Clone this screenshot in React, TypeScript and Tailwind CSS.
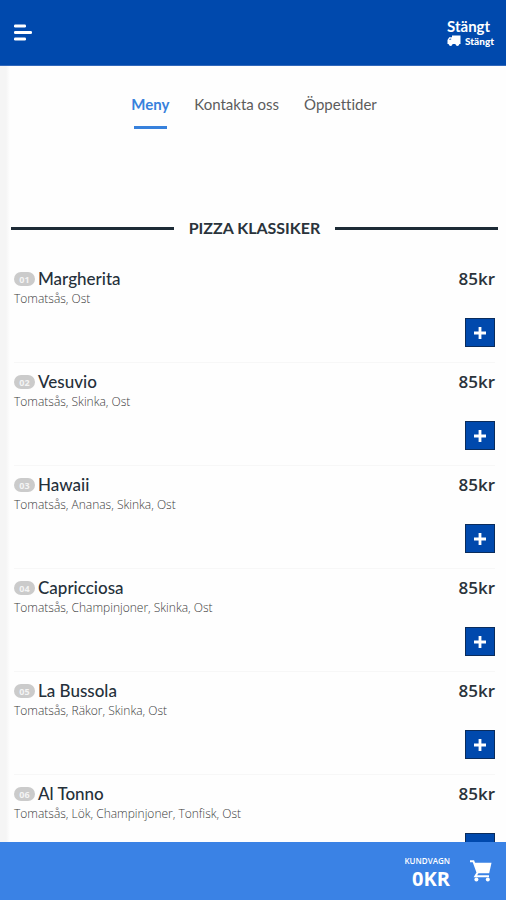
type Dish = { no: string; name: string; toppings: string; price: string };

const dishes: Dish[] = [
  { no: "01", name: "Margherita", toppings: "Tomatsås, Ost", price: "85kr" },
  { no: "02", name: "Vesuvio", toppings: "Tomatsås, Skinka, Ost", price: "85kr" },
  { no: "03", name: "Hawaii", toppings: "Tomatsås, Ananas, Skinka, Ost", price: "85kr" },
  { no: "04", name: "Capricciosa", toppings: "Tomatsås, Champinjoner, Skinka, Ost", price: "85kr" },
  { no: "05", name: "La Bussola", toppings: "Tomatsås, Räkor, Skinka, Ost", price: "85kr" },
  { no: "06", name: "Al Tonno", toppings: "Tomatsås, Lök, Champinjoner, Tonfisk, Ost", price: "85kr" },
];

function TruckIcon() {
  return (
    <svg viewBox="0 0 14 11" className="h-[11px] w-[14px]" fill="currentColor" aria-hidden="true">
      <path d="M5 0.5H13.5V9H0.5V5L2.2 2.2H5Z" />
      <path d="M1.8 5L3 3.4H4.2V5Z" fill="#5f8fd0" />
      <circle cx="3.6" cy="9.2" r="1.7" />
      <circle cx="10.4" cy="9.2" r="1.7" />
    </svg>
  );
}

function CartIcon() {
  return (
    <svg viewBox="0 0 24 24" className="h-6 w-6" aria-hidden="true">
      <path d="M1 2.2H4.4L8.6 13.6L6.4 17.2H20" fill="none" stroke="currentColor" strokeWidth="2" />
      <path d="M5 3.8H22.5L20.2 14.2H8.4Z" fill="currentColor" />
      <circle cx="7.4" cy="20.4" r="2" fill="currentColor" />
      <circle cx="18.8" cy="20.4" r="2" fill="currentColor" />
    </svg>
  );
}

function Header() {
  return (
    <header className="flex h-[66px] shrink-0 items-center justify-between border-b border-[#3168bb] bg-[#0049ad] pr-3 pl-3.5 text-white">
      <button type="button" aria-label="Öppna menyn" className="flex h-8 w-8 items-center">
        <svg viewBox="0 0 18 18" className="h-[18px] w-[18px]" fill="currentColor" aria-hidden="true">
          <rect x="0" y="0.5" width="12" height="3" rx="1.2" />
          <rect x="0" y="7" width="18" height="3" rx="1.2" />
          <rect x="0" y="13.5" width="12" height="3" rx="1.2" />
        </svg>
      </button>
      <div className="flex flex-col pb-0.5 font-bold">
        <span className="text-[15px] leading-[18px]">Stängt</span>
        <span className="flex items-center gap-1 text-[10px] leading-[12px] font-black">
          <TruckIcon />
          Stängt
        </span>
      </div>
    </header>
  );
}

function Tabs() {
  return (
    <nav className="flex justify-center gap-[25px] pt-7 pl-0.5 text-[15px] leading-[20px] text-[#5c5c5c] [font-variant-ligatures:none]">
      <a href="#meny" aria-current="page" className="flex flex-col items-center gap-3 font-bold text-[#3781dc]">
        Meny
        <span className="h-[3px] w-[33px] bg-[#3781dc]" />
      </a>
      <a href="#kontakt">Kontakta oss</a>
      <a href="#tider">Öppettider</a>
    </nav>
  );
}

function DishRow({ dish }: { dish: Dish }) {
  return (
    <li className="flex h-[103px] justify-between border-b border-[#f7f7f7] pt-2">
      <div>
        <h3 className="flex items-center gap-[3px] text-[17px] leading-[22px] font-medium text-[#25303a]">
          <span className="flex h-[14px] w-[21px] items-center justify-center rounded-full bg-[#cbcbcb] font-['Open_Sans',sans-serif] text-[9px] leading-none font-bold text-[#f4f4f4]">
            {dish.no}
          </span>
          {dish.name}
        </h3>
        <p className="font-['Open_Sans',sans-serif] text-[12px] leading-[18px] font-light text-[#3c3c3c]">{dish.toppings}</p>
      </div>
      <div className="flex flex-col items-end gap-7">
        <span className="font-['Open_Sans',sans-serif] text-[17px] leading-[22px] font-semibold text-[#2a333b]">
          {dish.price}
        </span>
        <button
          type="button"
          aria-label={`Lägg till ${dish.name}`}
          className="flex h-[29px] w-[30px] items-center justify-center border border-[#0a2c5c] bg-[#0049ad] text-white"
        >
          <svg viewBox="0 0 12 12" className="h-3 w-3" stroke="currentColor" strokeWidth="2.8" aria-hidden="true">
            <path d="M6 0V12M0 6H12" />
          </svg>
        </button>
      </div>
    </li>
  );
}

function CartBar() {
  return (
    <footer className="h-[58px] shrink-0 bg-[#3a82e5] text-white">
      <button type="button" className="flex h-full w-full items-center justify-end gap-[19px] pr-[13px]">
        <span className="flex flex-col items-end pt-2 font-['Open_Sans',sans-serif]">
          <span className="text-[8px] leading-[8px] font-semibold">KUNDVAGN</span>
          <span className="text-[20px] leading-[28px] font-bold">0KR</span>
        </span>
        <CartIcon />
      </button>
    </footer>
  );
}

export default function App() {
  return (
    <div className="flex h-screen flex-col bg-white font-['Lato',sans-serif]">
      <Header />
      <main className="min-h-0 flex-1 overflow-hidden bg-[linear-gradient(to_right,#f5f5f5_6px,#fefefe_10px)]">
        <Tabs />
        <section className="pt-[88px]">
          <h2 className="flex items-center gap-[15px] pr-2 pl-[11px] text-[16px] leading-[22px] font-bold text-[#2a333b]">
            <span className="h-[3px] flex-1 bg-[#1d2b36]" />
            PIZZA KLASSIKER
            <span className="h-[3px] flex-1 bg-[#1d2b36]" />
          </h2>
          <ul className="pt-[21px] pr-[11px] pl-3.5">
            {dishes.map((dish) => (
              <DishRow key={dish.no} dish={dish} />
            ))}
          </ul>
        </section>
      </main>
      <CartBar />
    </div>
  );
}
